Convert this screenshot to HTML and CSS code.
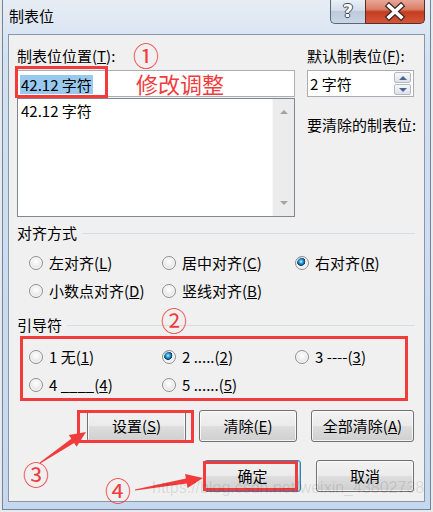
FILE: index.html
```html
<!doctype html>
<html lang="zh-CN">
<head>
	<meta charset="UTF-8" />
	<title>制表位</title>
<link rel="stylesheet" href="styles.css">
</head>
<body>
	<section id="dlg">
		<div class="cap">
			<span class="cap-title">制表位</span>
			<div class="cap-btns">
				<a href="javascript:;" class="cap-help">?</a>
				<a href="javascript:;" class="cap-close">
					<svg width="58" height="23" viewBox="0 0 58 23">
						<path d="M23 6 L35 17 M35 6 L23 17" stroke="#3a2a28" stroke-width="6" stroke-linecap="square" fill="none"/>
						<path d="M23 6 L35 17 M35 6 L23 17" stroke="#fff" stroke-width="3.6" stroke-linecap="square" fill="none"/>
					</svg>
				</a>
			</div>
		</div>
		<div class="client">
			<div class="top">
				<div class="col-left">
					<p class="lbl">制表位位置(<u>T</u>):</p>
					<div class="edit"><span class="sel">42.12 字符</span></div>
					<div class="list">
						<ul>
							<li>42.12 字符</li>
						</ul>
						<div class="vscroll"><i class="tri-up"></i><i class="tri-down"></i></div>
					</div>
				</div>
				<div class="col-right">
					<p class="lbl">默认制表位(<u>F</u>):</p>
					<div class="spin">
						<span>2 字符</span>
						<div class="spin-btns">
							<b><i class="tri-up"></i></b>
							<b><i class="tri-down"></i></b>
						</div>
					</div>
					<p class="lbl clear-lbl">要清除的制表位:</p>
				</div>
			</div>

			<div class="group">对齐方式</div>
			<div class="radios align">
				<label class="radio"><i></i><span>左对齐(<u>L</u>)</span></label>
				<label class="radio"><i></i><span>居中对齐(<u>C</u>)</span></label>
				<label class="radio"><i class="on"></i><span>右对齐(<u>R</u>)</span></label>
				<label class="radio"><i></i><span>小数点对齐(<u>D</u>)</span></label>
				<label class="radio"><i></i><span>竖线对齐(<u>B</u>)</span></label>
			</div>

			<div class="group lead-head">引导符</div>
			<div class="radios leader">
				<label class="radio"><i></i><span>1 无(<u>1</u>)</span></label>
				<label class="radio"><i class="on"></i><span>2 .....(<u>2</u>)</span></label>
				<label class="radio"><i></i><span>3 ----(<u>3</u>)</span></label>
				<label class="radio"><i></i><span>4 ____(<u>4</u>)</span></label>
				<label class="radio"><i></i><span>5 ......(<u>5</u>)</span></label>
			</div>

			<div class="btn-row">
				<a href="javascript:;" class="btn btn-set">设置(<u>S</u>)</a>
				<a href="javascript:;" class="btn btn-clear">清除(<u>E</u>)</a>
				<a href="javascript:;" class="btn btn-all">全部清除(<u>A</u>)</a>
			</div>
			<div class="btn-row ok-row">
				<a href="javascript:;" class="btn btn-ok">确定</a>
				<a href="javascript:;" class="btn btn-cancel">取消</a>
			</div>
		</div>

		<!-- 标注 -->
		<div class="mark mark-edit"></div>
		<div class="mark mark-set"></div>
		<div class="mark mark-ok"></div>
		<span class="note">修改调整</span>
		<span class="num n1">①</span>
		<span class="num n2">②</span>
		<span class="num n3">③</span>
		<span class="num n4">④</span>
		<svg class="arrows" width="433" height="512" viewBox="0 0 433 512">
			<polygon points="39.7,462.6 71.3,438.8 68.8,435.1 86,432 76.6,446.7 74.1,443 40.3,463.4" fill="#f23c3c"/>
			<polygon points="134.9,489.4 185.9,478.5 185.1,474.1 203,478 187.5,487.9 186.7,483.5 135.1,490.6" fill="#f23c3c"/>
		</svg>
		<span class="wm">https://blog.csdn.net/weixin_43802738</span>
	</section>
</body>
</html>
```
FILE: styles.css
```css
*{
	margin: 0;
	padding: 0;
}
body{
	font-family: "Noto Sans CJK SC", sans-serif;
	font-size: 15px;
	color: #000;
}
#dlg{
	position: relative;
	width: 433px;
	height: 512px;
	box-sizing: border-box;
	padding: 0 8px 10px;
	background: linear-gradient(#e6edf5 0, #d3e1f0 60px, #c6d8ed 100%);
	box-shadow: inset 2px 0 #e9e9e9, inset -2px 0 #e9e9e9, inset 0 -2px #e9e9e9,
		inset 3px 0 #6f84a0, inset -3px 0 #6f84a0, inset 0 -3px #6f84a0;
	overflow: hidden;
}

/* 标题栏 */
.cap{
	height: 34px;
	display: flex;
	justify-content: space-between;
	align-items: flex-start;
}
.cap-title{
	padding-left: 1px;
	margin-top: 6px;
	line-height: 20px;
}
.cap-btns{
	display: flex;
}
.cap-help, .cap-close{
	display: block;
	height: 24px;
	box-sizing: border-box;
	text-decoration: none;
}
.cap-help{
	width: 35px;
	border: 1px solid #58677a;
	border-top: none;
	border-right: none;
	border-radius: 0 0 0 5px;
	background: linear-gradient(#e9eff6 0, #d5dee9 45%, #bccadb 50%, #c9d6e5 100%);
	color: #fff;
	font: bold 18px/22px "DejaVu Sans", sans-serif;
	text-align: center;
	text-shadow: 1px 0 #3d4a5b, -1px 0 #3d4a5b, 0 1px #3d4a5b, 0 -1px #3d4a5b;
}
.cap-close{
	width: 60px;
	border: 1px solid #5b2d24;
	border-top: none;
	border-radius: 0 0 5px 0;
	background: linear-gradient(#e7a697 0, #d98068 40%, #c43c20 52%, #d5563a 100%);
}
.cap-close svg{
	display: block;
}

/* 客户区 */
.client{
	height: 468px;
	box-sizing: border-box;
	border: 1px solid #8596ad;
	background: #f0f0f0;
	padding: 11px 9px 0 8px;
}
.top{
	display: flex;
	gap: 12px;
}
.col-left{
	width: 278px;
}
.col-right{
	width: 108px;
}
.lbl{
	line-height: 20px;
	height: 20px;
	white-space: nowrap;
}
.edit{
	margin-top: 4px;
	height: 27px;
	box-sizing: border-box;
	border: 1px solid #abadb3;
	background: #fff;
	padding: 3px 0 0 2px;
}
.sel{
	display: inline-block;
	background: #99c9ef;
	line-height: 19px;
	height: 19px;
	padding: 0 1px;
}
.list{
	margin-top: 1px;
	height: 119px;
	box-sizing: border-box;
	border: 1px solid #828790;
	background: #fff;
	display: flex;
}
.list ul{
	flex: 1;
	list-style: none;
	padding: 2px 0 0 3px;
	line-height: 20px;
}
.vscroll{
	width: 21px;
	background: #ececec;
	border-left: 1px solid #f7f7f7;
	display: flex;
	flex-direction: column;
	justify-content: space-between;
	align-items: center;
	padding: 11px 0 11px;
}
.tri-up, .tri-down{
	display: block;
	width: 0;
	height: 0;
	border-left: 4px solid transparent;
	border-right: 4px solid transparent;
}
.tri-up{
	border-bottom: 4px solid #a3a3a3;
}
.tri-down{
	border-top: 4px solid #a3a3a3;
}
.spin{
	margin-top: 4px;
	width: 107px;
	height: 27px;
	box-sizing: border-box;
	border: 1px solid #abadb3;
	background: #fff;
	display: flex;
	justify-content: space-between;
	align-items: center;
	padding: 0 2px 0 2px;
	line-height: 20px;
}
.spin-btns{
	display: flex;
	flex-direction: column;
	gap: 1px;
}
.spin-btns b{
	display: flex;
	justify-content: center;
	align-items: center;
	width: 17px;
	height: 11px;
	box-sizing: border-box;
	border: 1px solid #b3bac4;
	border-radius: 2px;
	background: linear-gradient(#f6f7f9, #dde2e8);
}
.spin-btns .tri-up{
	border-bottom-color: #4c6490;
}
.spin-btns .tri-down{
	border-top-color: #4c6490;
}
.clear-lbl{
	margin-top: 18px;
}

/* 分组 */
.group{
	margin-top: 6px;
	display: flex;
	align-items: center;
	line-height: 20px;
}
.group::after{
	content: '';
	flex: 1;
	height: 1px;
	background: #d5dde6;
	margin-left: 5px;
}
.lead-head{
	margin-top: 14px;
}
.radios{
	display: grid;
	grid-template-columns: 133px 133px 1fr;
	grid-auto-rows: 20px;
	row-gap: 8px;
}
.align{
	margin-top: 10px;
	padding-left: 12px;
}
.leader{
	margin: 1px 7px 0 3px;
	border: 3px solid #f23c3c;
	padding: 8px 0 3px 6px;
}
.radio{
	display: flex;
	align-items: center;
	gap: 6px;
	line-height: 20px;
	white-space: nowrap;
}
.radio i{
	display: block;
	width: 14px;
	height: 14px;
	box-sizing: border-box;
	border-radius: 50%;
	border: 1px solid #8e8f8f;
	background: radial-gradient(circle at 50% 40%, #fff 0, #f2f2f2 35%, #d4d4d4 100%);
	box-shadow: inset 0 0 0 1px #fafafa;
}
.radio i.on{
	background: radial-gradient(circle at 42% 38%, #d4f1ff 0, #43b0e8 1.5px, #1670a8 3px, #0a3f6a 4px, #f4f4f4 4.6px, #d4d4d4 100%);
}

/* 按钮 */
.btn-row{
	display: flex;
	justify-content: flex-end;
	gap: 13px;
	margin-top: 9px;
	padding-right: 1px;
}
.ok-row{
	margin-top: 18px;
	gap: 15px;
}
.btn{
	display: flex;
	justify-content: center;
	align-items: center;
	height: 32px;
	box-sizing: border-box;
	border: 1px solid #707070;
	border-radius: 3px;
	background: linear-gradient(#f2f2f2 0, #ebebeb 48%, #dddddd 52%, #cfcfcf 100%);
	box-shadow: inset 0 0 0 1px rgba(255,255,255,.75);
	color: #000;
	text-decoration: none;
	line-height: 20px;
}
.btn-set{
	width: 99px;
}
.btn-clear{
	width: 98px;
}
.btn-all{
	width: 103px;
	margin-left: 1px;
}
.btn-ok{
	width: 97px;
	border-color: #3c7fb1;
	box-shadow: inset 0 0 0 1px #7ad6f7;
}
.btn-cancel{
	width: 98px;
}

/* 标注 */
.mark{
	position: absolute;
	box-sizing: border-box;
	border: 3px solid #f23c3c;
}
.mark-edit{
	left: 15px;
	top: 66px;
	width: 93px;
	height: 32px;
}
.mark-set{
	left: 77px;
	top: 410px;
	width: 117px;
	height: 33px;
}
.mark-ok{
	left: 203px;
	top: 461px;
	width: 95px;
	height: 30px;
}
.note{
	position: absolute;
	left: 136px;
	top: 70px;
	font-size: 22px;
	line-height: 26px;
	color: #f03c3c;
}
.num{
	position: absolute;
	font-size: 26px;
	line-height: 26px;
	color: #f03c3c;
}
.n1{ left: 133px; top: 42px; }
.n2{ left: 161px; top: 307px; }
.n3{ left: 23px; top: 461px; }
.n4{ left: 105px; top: 477px; }
.arrows{
	position: absolute;
	left: 0;
	top: 0;
	pointer-events: none;
}
.wm{
	position: absolute;
	left: 152px;
	top: 476px;
	font: 16px/24px "Liberation Sans", sans-serif;
	color: rgba(0,0,0,.11);
	white-space: nowrap;
	pointer-events: none;
}
```
